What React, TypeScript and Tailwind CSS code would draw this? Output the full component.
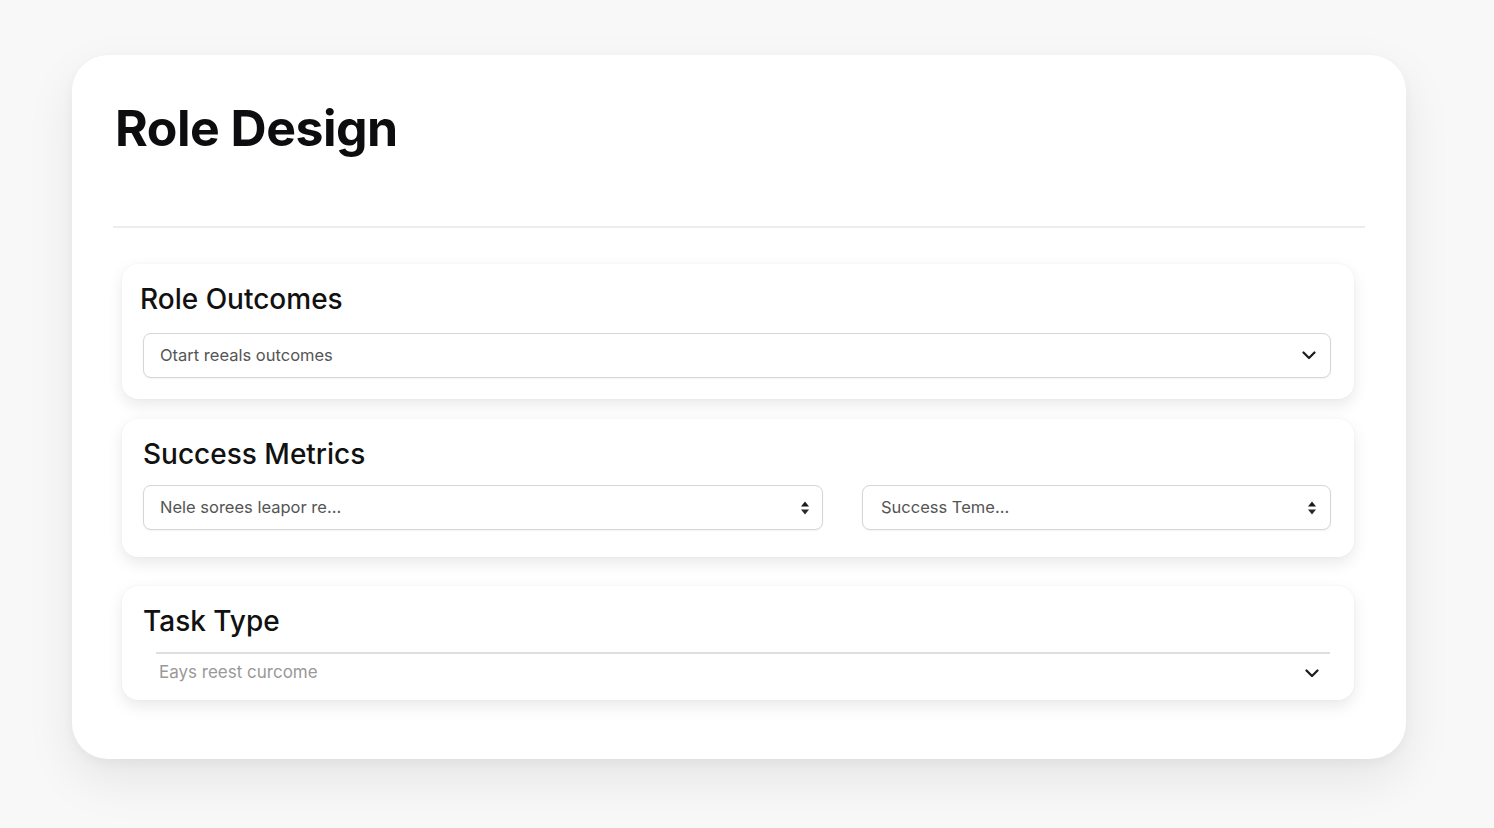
import React from "react";

const font = { fontFamily: "Inter, 'Noto Sans', sans-serif" };

function Chevron() {
  return (
    <svg width="14" height="9" viewBox="0 0 14 9" fill="none" aria-hidden="true">
      <path d="M1.5 1.5 7 7l5.5-5.5" stroke="#1a1a1a" strokeWidth="2.2" strokeLinecap="round" strokeLinejoin="round" />
    </svg>
  );
}

function UpDown() {
  return (
    <svg width="10" height="16" viewBox="0 0 10 16" aria-hidden="true">
      <path d="M5 1.5 9 6.5H1z" fill="#1a1a1a" />
      <path d="M5 14.5 9 9.5H1z" fill="#2a2a2a" />
    </svg>
  );
}

function SelectBox({ label, icon, className }: { label: string; icon: React.ReactNode; className?: string }) {
  return (
    <div
      className={
        "flex h-[45px] items-center justify-between rounded-[8px] border-[1.5px] border-[#d6d6d6] bg-white pl-[16px] shadow-[0_1px_2px_rgba(0,0,0,0.05)] " +
        (className ?? "")
      }
    >
      <span className="text-[16.5px] text-[#555]">{label}</span>
      {icon}
    </div>
  );
}

export default function App() {
  return (
    <div className="min-h-screen bg-[#f8f8f8] pt-[55px] pl-[72px]" style={font}>
      <div className="h-[704px] w-[1334px] rounded-[36px] bg-white px-[41px] pt-[48px] shadow-[0_20px_50px_rgba(0,0,0,0.08),0_4px_12px_rgba(0,0,0,0.04)]">
        <h1 className="pl-[2px] text-[50px] font-bold leading-none tracking-[-0.01em] text-[#0d0d0f]">Role Design</h1>
        <div className="mt-[73px] h-[2px] bg-[#ececec]" />

        <div className="ml-[9px] mr-[11px] mt-[36px] flex flex-col">
          <section className="rounded-[16px] bg-white pl-[21px] pr-[23px] pt-[21px] pb-[21px] shadow-[0_6px_16px_rgba(0,0,0,0.09),0_0_3px_rgba(0,0,0,0.04)]">
            <h2 className="-ml-[3px] text-[28px] font-medium leading-none text-[#111]">Role Outcomes</h2>
            <SelectBox className="mt-[20px] pr-[14px]" label="Otart reeals outcomes" icon={<Chevron />} />
          </section>

          <section className="mt-[20px] rounded-[16px] bg-white pl-[21px] pr-[23px] pt-[21px] pb-[27px] shadow-[0_6px_16px_rgba(0,0,0,0.09),0_0_3px_rgba(0,0,0,0.04)]">
            <h2 className="text-[28px] font-medium leading-none text-[#111]">Success Metrics</h2>
            <div className="mt-[17px] flex gap-[39px]">
              <SelectBox className="w-[680px] pr-[12px]" label="Nele sorees leapor re..." icon={<UpDown />} />
              <SelectBox className="flex-1 pl-[18px] pr-[13px]" label="Success Teme..." icon={<UpDown />} />
            </div>
          </section>

          <section className="mt-[29px] rounded-[16px] bg-white pl-[21px] pr-[24px] pt-[21px] pb-[15px] shadow-[0_6px_16px_rgba(0,0,0,0.09),0_0_3px_rgba(0,0,0,0.04)]">
            <h2 className="text-[28px] font-medium leading-none text-[#111]">Task Type</h2>
            <div className="ml-[13px] mt-[17px] h-[2px] bg-[#dedede]" />
            <div className="ml-[16px] mt-[7px] flex h-[24px] items-center justify-between pr-[11px]">
              <span className="text-[17px] text-[#999]">Eays reest curcome</span>
              <Chevron />
            </div>
          </section>
        </div>
      </div>
    </div>
  );
}
